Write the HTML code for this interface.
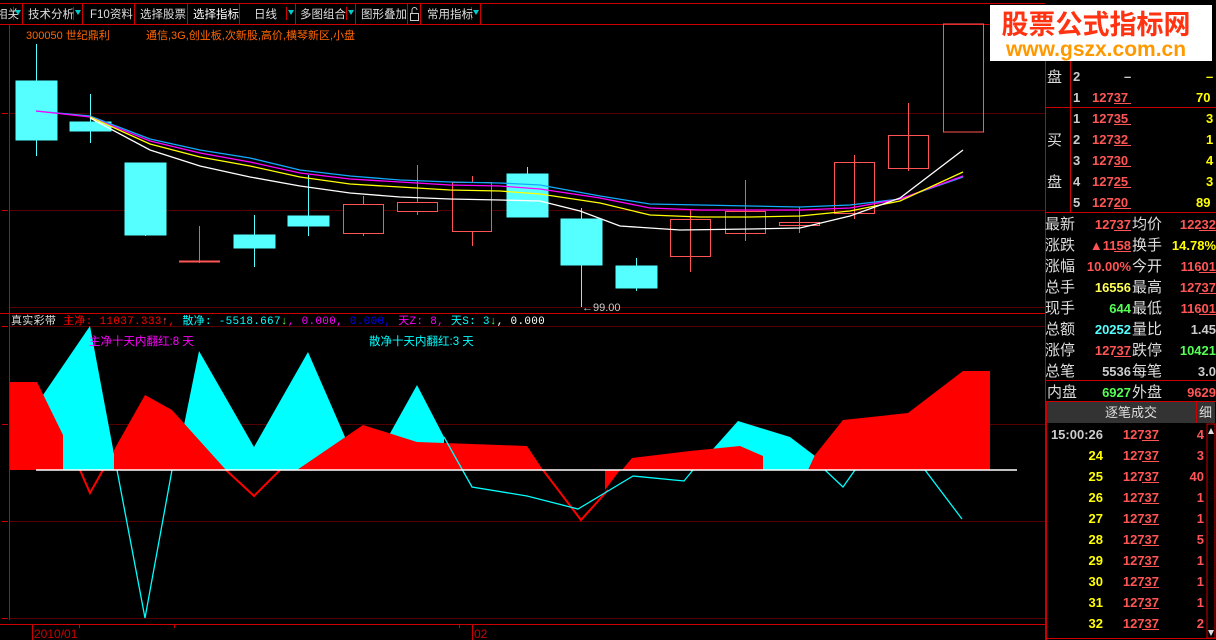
<!DOCTYPE html>
<html><head><meta charset="utf-8"><style>
*{margin:0;padding:0}
body{width:1216px;height:640px;background:#000;overflow:hidden;position:relative;font-family:"Liberation Mono","Noto Sans CJK SC",monospace;font-size:13px}
svg{position:absolute;left:0;top:0}
text{font-family:"Liberation Sans","Noto Sans CJK SC",sans-serif}
</style></head><body>
<svg width="1216" height="640" viewBox="0 0 1216 640">
<!-- toolbar -->
<g font-size="11.5" fill="#ddd">
<line x1="0" y1="3.5" x2="1045" y2="3.5" stroke="#c00"/>
<line x1="0" y1="24.5" x2="1045" y2="24.5" stroke="#c00"/>
<g stroke="#c00"><line x1="22.5" y1="3" x2="22.5" y2="24"/><line x1="82.5" y1="3" x2="82.5" y2="24"/><line x1="134.5" y1="3" x2="134.5" y2="24"/><line x1="187.5" y1="3" x2="187.5" y2="24"/><line x1="239.5" y1="3" x2="239.5" y2="24"/><line x1="295.5" y1="3" x2="295.5" y2="24"/><line x1="355.5" y1="3" x2="355.5" y2="24"/><line x1="407.5" y1="3" x2="407.5" y2="24"/><line x1="420.5" y1="3" x2="420.5" y2="24"/><line x1="480.5" y1="3" x2="480.5" y2="24"/>
<line x1="13.5" y1="7" x2="13.5" y2="20"/><line x1="73.5" y1="7" x2="73.5" y2="20"/><line x1="286.5" y1="7" x2="286.5" y2="20"/><line x1="346.5" y1="7" x2="346.5" y2="20"/><line x1="471.5" y1="7" x2="471.5" y2="20"/></g>
<text x="-4" y="18">相关</text>
<text x="28" y="18">技术分析</text>
<text x="90" y="18">F10资料</text>
<text x="140" y="18">选择股票</text>
<text x="193" y="18" fill="#fff">选择指标</text>
<text x="254" y="18">日线</text>
<text x="300" y="18">多图组合</text>
<text x="361" y="18">图形叠加</text>
<text x="427" y="18">常用指标</text>
<g fill="#0cc"><path d="M15 10h6l-3 5z"/><path d="M75 10h6l-3 5z"/><path d="M288 10h6l-3 5z"/><path d="M348 10h6l-3 5z"/><path d="M473 10h6l-3 5z"/></g>
<rect x="410.5" y="13.5" width="8" height="7" fill="none" stroke="#ccc"/><path d="M412 13v-3a2.5 2.5 0 0 1 5 0" fill="none" stroke="#ccc"/>
</g>
<!-- frame -->
<g stroke="#c00"><line x1="9.5" y1="24" x2="9.5" y2="620"/><line x1="1045.5" y1="24" x2="1045.5" y2="640"/>
<line x1="0" y1="313.5" x2="1045" y2="313.5"/><line x1="0" y1="624.5" x2="1045" y2="624.5"/></g>
<g stroke="#500"><line x1="10" y1="113.5" x2="1045" y2="113.5"/><line x1="10" y1="210.5" x2="1045" y2="210.5"/><line x1="10" y1="307.5" x2="1045" y2="307.5"/><line x1="10" y1="326.5" x2="1045" y2="326.5"/><line x1="10" y1="424.5" x2="1045" y2="424.5"/><line x1="10" y1="521.5" x2="1045" y2="521.5"/><line x1="10" y1="618.5" x2="1045" y2="618.5"/></g>
<g stroke="#c00"><line x1="2" y1="113.5" x2="8" y2="113.5"/><line x1="2" y1="210.5" x2="8" y2="210.5"/><line x1="2" y1="326.5" x2="8" y2="326.5"/><line x1="2" y1="424.5" x2="8" y2="424.5"/><line x1="2" y1="521.5" x2="8" y2="521.5"/><line x1="2" y1="618.5" x2="8" y2="618.5"/></g>
<!-- header text -->
<text x="26" y="39" fill="#f60" font-size="11">300050 世纪鼎利</text>
<text x="146" y="39" fill="#f60" font-size="11">通信,3G,创业板,次新股,高价,横琴新区,小盘</text>
<!-- candles -->
<g stroke="#5ff" fill="#5ff">
<line x1="36.5" y1="44" x2="36.5" y2="156"/><rect x="16" y="81" width="41" height="59"/>
<line x1="90.5" y1="94" x2="90.5" y2="143"/><rect x="70" y="122" width="41" height="9"/>
<line x1="145.5" y1="163" x2="145.5" y2="236"/><rect x="125" y="163" width="41" height="72"/>
<line x1="254.5" y1="215" x2="254.5" y2="267"/><rect x="234" y="235" width="41" height="13"/>
<line x1="308.5" y1="175" x2="308.5" y2="236"/><rect x="288" y="216" width="41" height="10"/>
<line x1="527.5" y1="167" x2="527.5" y2="174"/><rect x="507" y="174" width="41" height="43"/>
<line x1="581.5" y1="208" x2="581.5" y2="307"/><rect x="561" y="219" width="41" height="46"/>
<line x1="636.5" y1="258" x2="636.5" y2="291"/><rect x="616" y="266" width="41" height="22"/>
</g>
<g stroke="#f55" fill="none">
<line x1="199.5" y1="226" x2="199.5" y2="263"/><line x1="179" y1="261.5" x2="220" y2="261.5" stroke-width="2"/>
<line x1="363.5" y1="196" x2="363.5" y2="236"/><rect x="343.5" y="204.5" width="40" height="29" fill="#000"/>
<line x1="417.5" y1="165" x2="417.5" y2="215"/><rect x="397.5" y="202.5" width="40" height="9" fill="#000"/>
<line x1="472.5" y1="176" x2="472.5" y2="246"/><rect x="452.5" y="182.5" width="39" height="49" fill="#000"/>
<line x1="690.5" y1="210" x2="690.5" y2="272"/><rect x="670.5" y="219.5" width="40" height="37"/>
<line x1="745.5" y1="180" x2="745.5" y2="241"/><rect x="725.5" y="211.5" width="40" height="22"/>
<line x1="799.5" y1="207" x2="799.5" y2="233"/><rect x="779.5" y="222.5" width="40" height="3"/>
<line x1="854.5" y1="155" x2="854.5" y2="219"/><rect x="834.5" y="162.5" width="40" height="51"/>
<line x1="908.5" y1="103" x2="908.5" y2="171"/><rect x="888.5" y="135.5" width="40" height="33"/>
<rect x="943.5" y="24" width="40" height="108"/>
</g>
<!-- MAs -->
<g fill="none" stroke-width="1.3">
<polyline stroke="#1af" points="36,111 90,116 150,139 200,150 250,158 300,170 350,176 400,180 450,182 500,183 540,185 600,196 650,204 700,205 750,206 800,207 850,205 900,199 963,177"/>
<polyline stroke="#f0f" points="36,111 90,117 150,141 200,153 250,162 300,173 350,179 400,182 450,185 500,186 540,189 600,198 650,208 700,210 750,210 800,210 850,208 900,199 963,176"/>
<polyline stroke="#ff0" points="90,117 150,144 200,157 250,166 300,177 350,184 400,187 450,190 500,191 540,194 600,203 650,215 700,217 750,217 800,216 850,211 900,201 963,172"/>
<polyline stroke="#fff" points="90,118 150,150 200,166 250,177 300,186 350,193 400,197 450,199 500,200 540,201 580,211 620,226 680,230 750,229 800,228 850,216 900,198 963,150"/>
</g>
<text x="582" y="311" fill="#ccc" font-size="11">←99.00</text>
<!-- indicator header -->
<text x="11" y="324" font-size="11" style="font-family:'Liberation Mono','Noto Sans CJK SC',monospace" letter-spacing="0.3"><tspan fill="#ddd">真实彩带 </tspan><tspan fill="#f00">主净: 11037.333</tspan><tspan fill="#f55">↑</tspan><tspan fill="#f00">, </tspan><tspan fill="#0ff">散净: -5518.667</tspan><tspan fill="#5f5">↓</tspan><tspan fill="#f0f">, 0.000, </tspan><tspan fill="#00f">0.000, </tspan><tspan fill="#f0f">天Z: 8, </tspan><tspan fill="#0ff">天S: 3</tspan><tspan fill="#5f5">↓</tspan><tspan fill="#fff">, 0.000</tspan></text>
<!-- indicator areas -->
<g stroke="none">
<polygon fill="#0ff" points="43,395 90,326 117,470 43,470"/>
<polygon fill="#0ff" points="183,430 199,351 254,447 308,352 345,437 345,470 183,470"/>
<polygon fill="#0ff" points="388,437 417,385 444,437 444,470 388,470"/>
<polygon fill="#0ff" points="713,449 738,421 790,437 815,456 815,470 713,470"/>
<polygon fill="#f00" points="10,382 37,382 63,435 63,470 10,470"/>
<polygon fill="#f00" points="114,450 145,395 172,410 226,470 114,470"/>
<polygon fill="#f00" points="297,470 363,425 417,442 472,444 527,446 543,470"/>
<polygon fill="#f00" points="605,470 605,490 620,470"/>
<polygon fill="#f00" points="622,470 632,458 690,451 740,446 763,456 763,470"/>
<polygon fill="#f00" points="808,470 815,455 843,420 908,413 963,371 990,371 990,470"/>
</g>
<g fill="none" stroke-width="1.3">
<polyline stroke="#f00" stroke-width="2" points="80,470 90,493 103,470"/>
<polyline stroke="#f00" stroke-width="2" points="226,470 254,496 280,470"/>
<polyline stroke="#f00" stroke-width="2" points="543,470 581,520 608,490"/>
<polyline stroke="#0ff" points="117,470 145,618 172,470"/>
<polyline stroke="#0ff" points="444,437 472,487 527,496 578,509 633,476 684,481 693,470"/>
<polyline stroke="#0ff" points="825,470 843,487 855,470"/>
<polyline stroke="#0ff" points="925,470 962,519"/>
</g>
<line x1="36" y1="470" x2="1017" y2="470" stroke="#fff" stroke-width="1.5"/>
<text x="89" y="345" fill="#f0f" font-size="11.5">主净十天内翻红:8 天</text>
<text x="369" y="345" fill="#0ff" font-size="11.5">散净十天内翻红:3 天</text>
<!-- bottom axis -->
<g stroke="#c00"><line x1="32.5" y1="624" x2="32.5" y2="640"/><line x1="472.5" y1="624" x2="472.5" y2="640"/><line x1="79.5" y1="624" x2="79.5" y2="628"/><line x1="174.5" y1="624" x2="174.5" y2="628"/><line x1="459.5" y1="624" x2="459.5" y2="628"/></g>
<text x="34" y="638" fill="#c00" font-size="12" font-family="Liberation Mono">2010/01</text><text x="474" y="638" fill="#c00" font-size="12" font-family="Liberation Mono">02</text>
<!-- right panel -->
<g stroke="#c00"><line x1="1070.5" y1="60" x2="1070.5" y2="212"/><line x1="1045" y1="107.5" x2="1216" y2="107.5"/><line x1="1045" y1="212.5" x2="1216" y2="212.5"/><line x1="1045" y1="380.5" x2="1216" y2="380.5"/><line x1="1045" y1="401.5" x2="1216" y2="401.5"/><line x1="1046.5" y1="401" x2="1046.5" y2="640"/><line x1="1045" y1="638.5" x2="1216" y2="638.5"/></g>
<rect x="1047" y="402" width="168" height="21" fill="#333"/>
<line x1="1196.5" y1="402" x2="1196.5" y2="423" stroke="#c00"/>
<text x="1105" y="417" fill="#ddd" font-size="13">逐笔成交</text><text x="1199" y="417" fill="#ddd" font-size="13">细</text>
<g font-family="Liberation Mono" font-size="13" font-weight="bold">
<text x="1047" y="82" fill="#ddd" font-weight="normal" font-size="15">盘</text>
<text x="1073" y="81" fill="#ccc">2</text><text x="1124" y="81" fill="#ccc">–</text><text x="1206" y="81" fill="#ff0">–</text>
<text x="1073" y="102" fill="#ccc">1</text><text x="1092" y="102" fill="#f55">12737</text><text x="1196" y="102" fill="#ff0">70</text>
<text x="1047" y="145" fill="#ddd" font-weight="normal" font-size="15">买</text>
<text x="1047" y="187" fill="#ddd" font-weight="normal" font-size="15">盘</text>
<text x="1073" y="123" fill="#ccc">1</text><text x="1092" y="123" fill="#f55">12735</text><text x="1206" y="123" fill="#ff0">3</text>
<text x="1073" y="144" fill="#ccc">2</text><text x="1092" y="144" fill="#f55">12732</text><text x="1206" y="144" fill="#ff0">1</text>
<text x="1073" y="165" fill="#ccc">3</text><text x="1092" y="165" fill="#f55">12730</text><text x="1206" y="165" fill="#ff0">4</text>
<text x="1073" y="186" fill="#ccc">4</text><text x="1092" y="186" fill="#f55">12725</text><text x="1206" y="186" fill="#ff0">3</text>
<text x="1073" y="207" fill="#ccc">5</text><text x="1092" y="207" fill="#f55">12720</text><text x="1196" y="207" fill="#ff0">89</text>
</g>
<g font-size="15" fill="#ddd">
<text x="1045" y="229">最新</text><text x="1132" y="229">均价</text>
<text x="1045" y="250">涨跌</text><text x="1132" y="250">换手</text>
<text x="1045" y="271">涨幅</text><text x="1132" y="271">今开</text>
<text x="1045" y="292">总手</text><text x="1132" y="292">最高</text>
<text x="1045" y="313">现手</text><text x="1132" y="313">最低</text>
<text x="1045" y="334">总额</text><text x="1132" y="334">量比</text>
<text x="1045" y="355">涨停</text><text x="1132" y="355">跌停</text>
<text x="1045" y="376">总笔</text><text x="1132" y="376">每笔</text>
<text x="1047" y="397">内盘</text><text x="1132" y="397">外盘</text>
</g>
<g font-family="Liberation Mono" font-size="13" font-weight="bold" text-anchor="end">
<text x="1131" y="229" fill="#f55">12737</text><text x="1216" y="229" fill="#f55">12232</text>
<text x="1131" y="250" fill="#f55">▲1158</text><text x="1216" y="250" fill="#ff0">14.78%</text>
<text x="1131" y="271" fill="#f55">10.00%</text><text x="1216" y="271" fill="#f55">11601</text>
<text x="1131" y="292" fill="#ff5">16556</text><text x="1216" y="292" fill="#f55">12737</text>
<text x="1131" y="313" fill="#5f5">644</text><text x="1216" y="313" fill="#f55">11601</text>
<text x="1131" y="334" fill="#5ff">20252</text><text x="1216" y="334" fill="#ccc">1.45</text>
<text x="1131" y="355" fill="#f55">12737</text><text x="1216" y="355" fill="#5f5">10421</text>
<text x="1131" y="376" fill="#ccc">5536</text><text x="1216" y="376" fill="#ccc">3.0</text>
<text x="1131" y="397" fill="#5f5">6927</text><text x="1216" y="397" fill="#f55">9629</text>
<text x="1103" y="439" fill="#ccc">15:00:26</text>
<text x="1103" y="460" fill="#ff0">24</text><text x="1103" y="481" fill="#ff0">25</text><text x="1103" y="502" fill="#ff0">26</text><text x="1103" y="523" fill="#ff0">27</text><text x="1103" y="544" fill="#ff0">28</text><text x="1103" y="565" fill="#ff0">29</text><text x="1103" y="586" fill="#ff0">30</text><text x="1103" y="607" fill="#ff0">31</text><text x="1103" y="628" fill="#ff0">32</text>
<g fill="#f55"><text x="1159" y="439">12737</text><text x="1159" y="460">12737</text><text x="1159" y="481">12737</text><text x="1159" y="502">12737</text><text x="1159" y="523">12737</text><text x="1159" y="544">12737</text><text x="1159" y="565">12737</text><text x="1159" y="586">12737</text><text x="1159" y="607">12737</text><text x="1159" y="628">12737</text>
<text x="1204" y="439">4</text><text x="1204" y="460">3</text><text x="1204" y="481">40</text><text x="1204" y="502">1</text><text x="1204" y="523">1</text><text x="1204" y="544">5</text><text x="1204" y="565">1</text><text x="1204" y="586">1</text><text x="1204" y="607">1</text><text x="1204" y="628">2</text></g>
</g>
<g stroke="#f55"><line x1="1114" y1="103.5" x2="1131" y2="103.5"/><line x1="1114" y1="124.5" x2="1131" y2="124.5"/><line x1="1114" y1="145.5" x2="1131" y2="145.5"/><line x1="1114" y1="166.5" x2="1131" y2="166.5"/><line x1="1114" y1="187.5" x2="1131" y2="187.5"/><line x1="1114" y1="208.5" x2="1131" y2="208.5"/><line x1="1114" y1="230.5" x2="1131" y2="230.5"/><line x1="1114" y1="251.5" x2="1131" y2="251.5"/><line x1="1114" y1="356.5" x2="1131" y2="356.5"/><line x1="1199" y1="230.5" x2="1216" y2="230.5"/><line x1="1199" y1="293.5" x2="1216" y2="293.5"/><line x1="1199" y1="272.5" x2="1216" y2="272.5"/><line x1="1199" y1="314.5" x2="1216" y2="314.5"/>
<line x1="1142" y1="440.5" x2="1159" y2="440.5"/><line x1="1142" y1="461.5" x2="1159" y2="461.5"/><line x1="1142" y1="482.5" x2="1159" y2="482.5"/><line x1="1142" y1="503.5" x2="1159" y2="503.5"/><line x1="1142" y1="524.5" x2="1159" y2="524.5"/><line x1="1142" y1="545.5" x2="1159" y2="545.5"/><line x1="1142" y1="566.5" x2="1159" y2="566.5"/><line x1="1142" y1="587.5" x2="1159" y2="587.5"/><line x1="1142" y1="608.5" x2="1159" y2="608.5"/><line x1="1142" y1="629.5" x2="1159" y2="629.5"/></g>
<rect x="1207" y="424" width="8" height="214" fill="#000" stroke="#c00"/>
<path d="M1208 434l3-6 3 6z M1208 630l3 6 3-6z" fill="#ddd"/>
<!-- logo -->
<rect x="990" y="5" width="222" height="56" fill="#fff"/>
<text x="1096" y="34" text-anchor="middle" fill="#f31" font-size="27" font-weight="bold" font-family="Noto Sans CJK SC, sans-serif">股票公式指标网</text>
<text x="1096" y="56" text-anchor="middle" fill="#f90" font-size="21" font-weight="bold">www.gszx.com.cn</text>
</svg>
</body></html>
